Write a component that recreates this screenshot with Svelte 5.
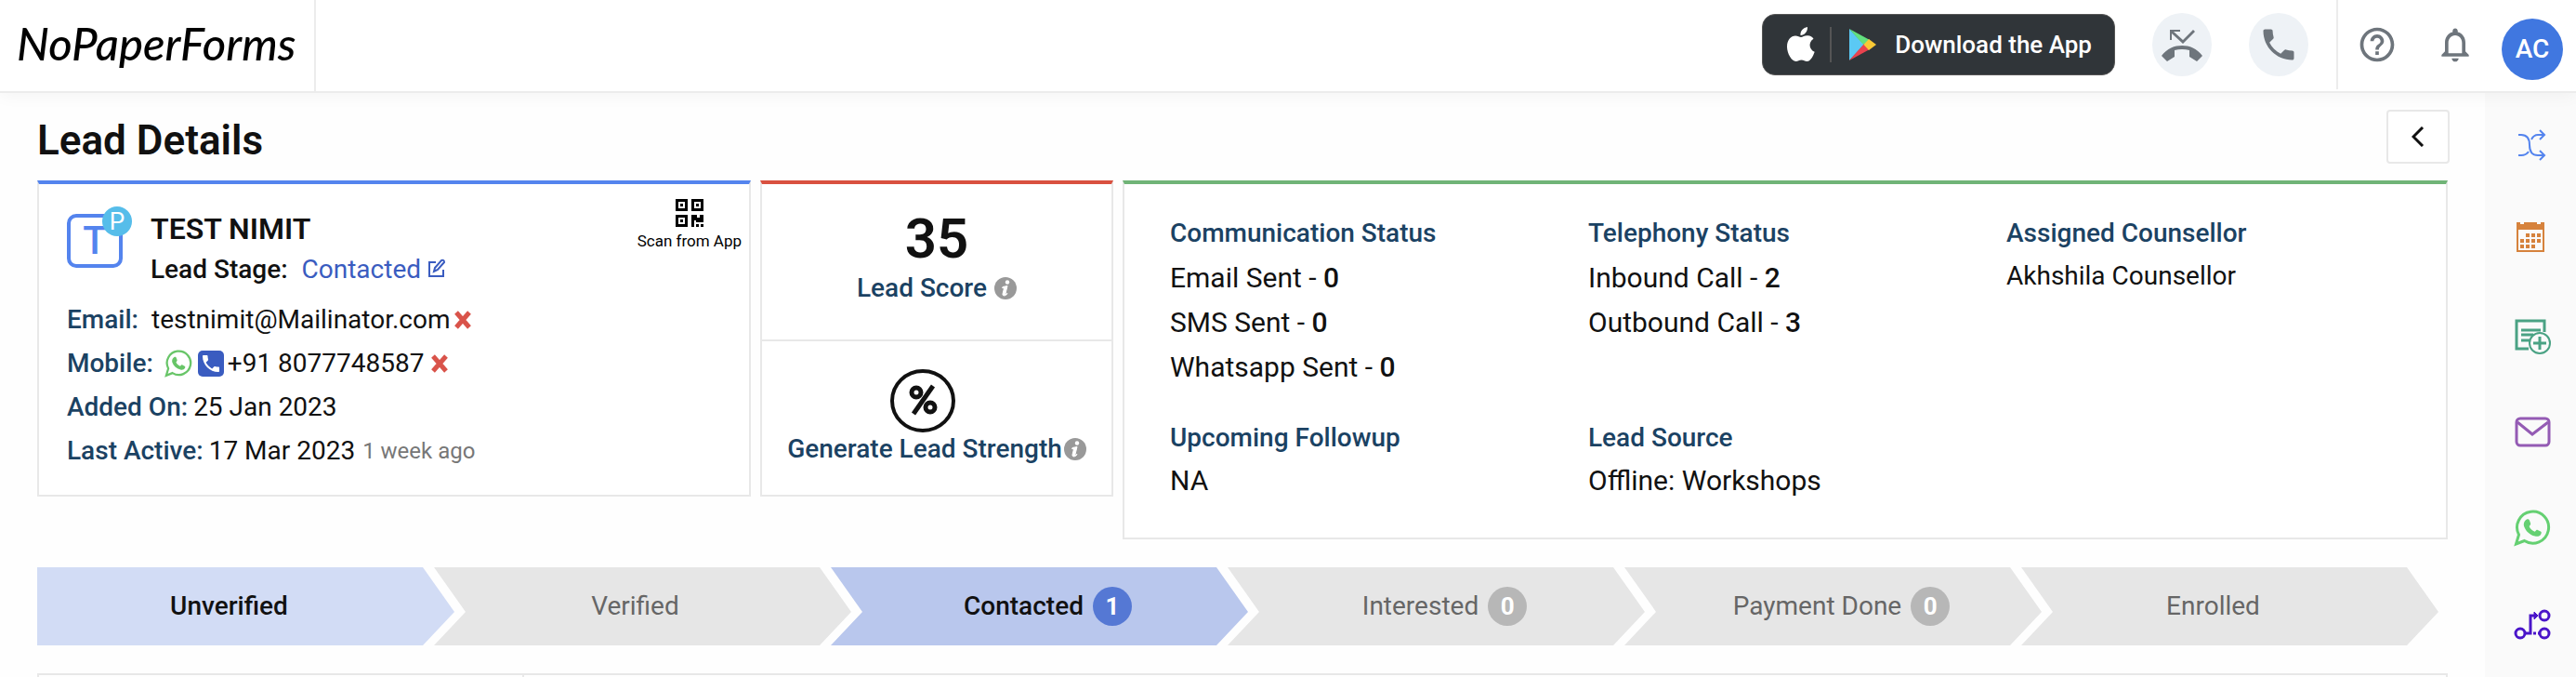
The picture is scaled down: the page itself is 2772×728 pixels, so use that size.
<script>
    let contact = [
        { label: "Added On:", value: "25 Jan 2023", note: "" },
        { label: "Last Active:", value: "17 Mar 2023", note: "1 week ago" },
    ]

    let groups = [
        {
            title: "Communication Status",
            lines: [
                { text: "Email Sent", count: 0 },
                { text: "SMS Sent", count: 0 },
                { text: "Whatsapp Sent", count: 0 },
            ],
        },
        {
            title: "Telephony Status",
            lines: [
                { text: "Inbound Call", count: 2 },
                { text: "Outbound Call", count: 3 },
            ],
        },
        { title: "Assigned Counsellor", value: "Akhshila Counsellor", small: true },
        { title: "Upcoming Followup", value: "NA" },
        { title: "Lead Source", value: "Offline: Workshops" },
    ]

    let stages = [
        { name: "Unverified", state: "done" },
        { name: "Verified", state: "" },
        { name: "Contacted", state: "current", count: 1 },
        { name: "Interested", state: "", count: 0 },
        { name: "Payment Done", state: "", count: 0 },
        { name: "Enrolled", state: "" },
    ]
</script>

{#snippet whatsapp(size)}
    <svg width={size} height={size} viewBox="0 0 40 40" fill="none" aria-hidden="true">
        <path d="M5.500 27 2.500 37l9-3.500a17 17 0 1 0-6-6.500Z" stroke="currentColor" stroke-width="3" />
        <path d="M14 10.500c1.500-.5 2.600 0 3.200 1.700l.9 2.600c.3 1-.2 1.800-1.500 3.200 1.300 2.700 3.300 4.600 6.100 5.800 1.500-1.700 2-2.300 3.100-1.900l3.200 1.600c1 .6.900 1.500.4 2.700-1 2.200-3.700 3.200-6.500 2.400-6.200-1.800-10-5.600-11.800-10.700-.9-2.900.6-6.300 2.900-7.400Z" fill="currentColor" />
    </svg>
{/snippet}

{#snippet info()}
    <svg width="24" height="24" viewBox="0 0 24 24" aria-hidden="true">
        <circle cx="12" cy="12" r="12" fill="#999" />
        <circle cx="14" cy="5.500" r="2.200" fill="#fff" />
        <path d="M9 10.500 14 9.500 12 17.500c-.3 1.200.6 1 2 0-1.500 3-5.500 3.300-5 .5L10.500 12 8.500 11.500Z" fill="#fff" stroke="#fff" />
    </svg>
{/snippet}

{#snippet cross()}
    <svg class="cross" width="18" height="20" viewBox="0 0 18 20" aria-hidden="true">
        <path d="m2 2 14 16M16 2 2 18" stroke="#d9534a" stroke-width="5" />
    </svg>
{/snippet}

<header>
    <a href="/" class="logo">NoPaperForms</a>
    <div class="tools">
        <button class="download">
            <svg width="30" height="38" viewBox="0 0 30 38" fill="#fff" aria-hidden="true">
                <path d="M22 0c.4 4.800-3.200 9-7.500 9C14 4.500 17.500.7 22 0ZM15 11c1.800 0 4-2 7.400-1.700 2.700.2 4.800 1.400 6.100 3.400-6 3.700-4.800 11.700 1.200 14C28 31.600 25 37 21.500 37c-2.500 0-3.300-1.500-6-1.500S12 37 9.500 37C5 37 0 28.500 0 21.300 0 13.500 4.500 9.500 9 9.500c2.500 0 4.600 1.500 6 1.500Z" />
            </svg>
            <span class="bar"></span>
            <svg width="30" height="34" viewBox="0 0 30 34" aria-hidden="true">
                <path d="M1 0v34l16-17Z" fill="#5bc9f4" />
                <path d="M1 0 23 12l-6 6Z" fill="#63e07f" />
                <path d="m1 34 22-12-6-6Z" fill="#e8434f" />
                <path d="m22 11 8 6-8 6-5.500-6Z" fill="#f9c935" />
            </svg>
            Download the App
        </button>
        <button class="round" aria-label="Missed calls">
            <svg width="44" height="44" viewBox="0 0 44 44" fill="currentColor" aria-hidden="true">
                <path d="M9 6h11v2h-7l10 9L34 6l2 2-13 13L11 10v7H9Z" />
                <path d="M0 34C6 26 14 23 22 23s16 3 22 11l-6 6-8-5v-7q-8-2-16 0v7l-8 5Z" />
            </svg>
        </button>
        <button class="round" aria-label="Call">
            <svg width="44" height="44" viewBox="0 0 24 24" fill="currentColor" aria-hidden="true">
                <path d="M6.620 10.790c1.440 2.830 3.760 5.140 6.590 6.590l2.200-2.200c.27-.27.670-.36 1.020-.24 1.120.37 2.330.57 3.570.57.55 0 1 .45 1 1V20c0 .55-.45 1-1 1-9.390 0-17-7.610-17-17 0-.55.450-1 1-1h3.500c.55 0 1 .45 1 1 0 1.250.2 2.450.57 3.570.11.350.03.740-.25 1.020l-2.200 2.200z" />
            </svg>
        </button>
        <div class="account">
            <button aria-label="Help">
                <svg width="44" height="44" viewBox="0 0 24 24" fill="currentColor" aria-hidden="true">
                    <path d="M11 18h2v-2h-2v2zm1-16C6.480 2 2 6.480 2 12s4.480 10 10 10 10-4.480 10-10S17.520 2 12 2zm0 18c-4.410 0-8-3.590-8-8s3.590-8 8-8 8 3.590 8 8-3.590 8-8 8zm0-14c-2.210 0-4 1.790-4 4h2c0-1.100.9-2 2-2s2 .9 2 2c0 2-3 1.750-3 5h2c0-2.250 3-2.500 3-5 0-2.210-1.790-4-4-4z" />
                </svg>
            </button>
            <button aria-label="Notifications">
                <svg width="44" height="44" viewBox="0 0 24 24" fill="currentColor" aria-hidden="true">
                    <path d="M12 22c1.100 0 2-.9 2-2h-4c0 1.100.9 2 2 2zm6-6v-5c0-3.070-1.630-5.640-4.500-6.320V4c0-.83-.67-1.500-1.500-1.500s-1.500.67-1.500 1.500v.68C7.640 5.360 6 7.920 6 11v5l-2 2v1h16v-1l-2-2zm-2 1H8v-6c0-2.480 1.510-4.500 4-4.500s4 2.020 4 4.500v6z" />
                </svg>
            </button>
            <button class="avatar">AC</button>
        </div>
    </div>
</header>

<div class="page">
    <main>
        <div class="title">
            <h1>Lead Details</h1>
            <button class="back" aria-label="Back">
                <svg width="14" height="22" viewBox="0 0 14 22" fill="none" aria-hidden="true">
                    <path d="M12 1 2 11l10 10" stroke="#111" stroke-width="3" />
                </svg>
            </button>
        </div>

        <div class="cards">
            <section class="card lead">
                <div class="person">
                    <div class="initial">T<span class="badge">P</span></div>
                    <div>
                        <h2>TEST NIMIT</h2>
                        <p class="stage-line">
                            <b>Lead Stage:</b>
                            <a href="#stage">Contacted
                                <svg width="20" height="22" viewBox="0 0 20 22" fill="none" stroke="currentColor" stroke-width="2" aria-hidden="true">
                                    <path d="M9 5H2v15h15v-7M8 11l7-8q3-1 3 2l-7 8-4 2Z" />
                                </svg>
                            </a>
                        </p>
                    </div>
                    <button class="scan">
                        <svg width="30" height="30" viewBox="0 0 30 30" fill="#000" aria-hidden="true">
                            <path fill-rule="evenodd" d="M0 0h13v13H0zM3 3v7h7V3zM17 0h13v13H17zM20 3v7h7V3zM0 17h13v13H0zM3 20v7h7v-7z" />
                            <path d="M5 5h3v3H5zM22 5h3v3h-3zM5 22h3v3H5zM17 17h6v3h3v-3h4v8h-8v-2h-2v7h-3zM22 27h3v3h-3zM27 27h3v3h-3z" />
                        </svg>
                        Scan from App
                    </button>
                </div>
                <dl>
                    <div class="email">
                        <dt>Email:</dt>
                        <dd>testnimit@Mailinator.com{@render cross()}</dd>
                    </div>
                    <div>
                        <dt>Mobile:</dt>
                        <dd class="mobile">
                            <span class="wa">{@render whatsapp(30)}</span>
                            <span class="dial">
                                <svg width="24" height="24" viewBox="0 0 24 24" fill="#fff" aria-hidden="true">
                                    <path d="M6.620 10.790c1.440 2.830 3.760 5.140 6.590 6.590l2.200-2.200c.27-.27.670-.36 1.020-.24 1.120.37 2.330.57 3.570.57.55 0 1 .45 1 1V20c0 .55-.45 1-1 1-9.390 0-17-7.610-17-17 0-.55.450-1 1-1h3.500c.55 0 1 .45 1 1 0 1.250.2 2.450.57 3.570.11.350.03.740-.25 1.020l-2.200 2.200z" />
                                </svg>
                            </span>
                            +91 8077748587{@render cross()}
                        </dd>
                    </div>
                    {#each contact as item}
                        <div>
                            <dt>{item.label}</dt>
                            <dd>{item.value} {#if item.note}<small>{item.note}</small>{/if}</dd>
                        </div>
                    {/each}
                </dl>
            </section>

            <section class="card score">
                <div class="cell">
                    <strong>35</strong>
                    <p>Lead Score {@render info()}</p>
                </div>
                <div class="cell strength">
                    <svg class="percent" width="70" height="68" viewBox="0 0 70 68" fill="none" stroke="#111" aria-hidden="true">
                        <ellipse cx="35" cy="34" rx="33" ry="32" stroke-width="4" />
                        <circle cx="28" cy="25" r="5" stroke-width="5" />
                        <circle cx="43" cy="41" r="5" stroke-width="5" />
                        <path d="m25 48 21-30" stroke-width="5" />
                    </svg>
                    <p>Generate Lead Strength{@render info()}</p>
                </div>
            </section>

            <section class="card status">
                {#each groups as group}
                    <div>
                        <h3>{group.title}</h3>
                        {#if group.lines}
                            {#each group.lines as line}
                                <p>{line.text} - <b>{line.count}</b></p>
                            {/each}
                        {:else}
                            <p class="value" class:small={group.small}>{group.value}</p>
                        {/if}
                    </div>
                {/each}
            </section>
        </div>

        <ol class="stages">
            {#each stages as stage}
                <li class={stage.state} class:counted={stage.count !== undefined}>
                    {stage.name}
                    {#if stage.count !== undefined}<span>{stage.count}</span>{/if}
                </li>
            {/each}
        </ol>

        <div class="panels"><div></div><div></div></div>
    </main>

    <nav>
        <a href="#reassign" class="shuffle" aria-label="Reassign">
            <svg width="40" height="40" viewBox="0 0 40 40" fill="none" stroke="currentColor" stroke-width="2" aria-hidden="true">
                <path d="M5 9h3c6 0 9 4 9 11s3 11 9 11h7M5 31h3c4 0 6-1 8-4M19 14c2-4 4-5 7-5h7M28 4l5 5-5 5M28 26l5 5-5 5" />
            </svg>
        </a>
        <a href="#calendar" class="calendar" aria-label="Calendar">
            <svg width="40" height="40" viewBox="0 4 40 40" fill="currentColor" aria-hidden="true">
                <path fill-rule="evenodd" d="M3 4h4v2h4V4h14v2h4V4h4v32H3zM5 12v22h26V12z" />
                <path d="M13 16h4v4h-4zM19 16h4v4h-4zM25 16h4v4h-4zM7 22h4v4H7zM13 22h4v4h-4zM19 22h4v4h-4zM25 22h4v4h-4zM7 28h4v4H7zM13 28h4v4h-4zM19 28h4v4h-4z" />
            </svg>
        </a>
        <a href="#note" class="note" aria-label="Add note">
            <svg width="40" height="40" viewBox="0 0 40 40" fill="none" stroke="currentColor" aria-hidden="true">
                <path d="M16 33H3V3h30v12M8 13h21M8 18h13M8 24h9" stroke-width="3" />
                <circle cx="28" cy="27" r="11" stroke-width="2" />
                <path d="M28 20v14M21 27h14" stroke-width="3" />
            </svg>
        </a>
        <a href="#mail" class="mail" aria-label="Email">
            <svg width="40" height="40" viewBox="0 0 40 40" fill="none" stroke="currentColor" stroke-width="3" aria-hidden="true">
                <rect x="3" y="5" width="35" height="29" rx="4" />
                <path d="m4 9 16 13L37 9" />
            </svg>
        </a>
        <a href="#whatsapp" class="chat" aria-label="WhatsApp">{@render whatsapp(40)}</a>
        <a href="#journey" class="journey" aria-label="Journey">
            <svg width="40" height="40" viewBox="0 0 40 40" fill="none" stroke="currentColor" stroke-width="3" aria-hidden="true">
                <circle cx="7" cy="30" r="5" />
                <circle cx="33" cy="30" r="5" />
                <circle cx="33" cy="11" r="5" />
                <path d="M12 30h6V11h5M21 30h3M26 30h2" />
                <path d="m22 7 4 4-4 4Z" fill="currentColor" stroke-width="1" />
            </svg>
        </a>
    </nav>
</div>

<style>
    :global(body) {
        background: #fefefe;
        color: #111;
        font-family: Roboto, "Liberation Sans", sans-serif;
        font-size: 28px;
        line-height: 48px;
    }

    h1,
    h2,
    h3,
    p,
    dl,
    dd,
    ol {
        margin: 0;
        padding: 0;
    }

    button {
        display: flex;
        align-items: center;
        justify-content: center;
        padding: 0;
        border: none;
        background: none;
        color: inherit;
        font: inherit;
        cursor: pointer;
    }

    a {
        text-decoration: none;
    }

    b {
        font-weight: 500;
    }

    svg {
        flex: none;
    }

    header {
        position: relative;
        display: flex;
        justify-content: space-between;
        height: 98px;
        border-bottom: 2px solid #ececec;
        background: #fff;
        box-shadow: 0 4px 16px rgba(0, 0, 0, 0.04);
    }

    .logo {
        box-sizing: border-box;
        width: 340px;
        padding-left: 18px;
        border-right: 2px solid #ececec;
        color: #000;
        font-family: Lato, sans-serif;
        font-size: 49px;
        font-style: italic;
        font-weight: 500;
        line-height: 92px;
    }

    .tools {
        display: flex;
        align-items: center;
        height: 96px;
    }

    .download {
        box-sizing: border-box;
        height: 66px;
        padding: 0 24px 0 26px;
        margin-right: 40px;
        border: 1px solid #555;
        border-radius: 14px;
        background: #303539;
        color: #fff;
        font-size: 26px;
        font-weight: 500;
    }

    .bar {
        width: 2px;
        height: 38px;
        margin: 0 18px 0 16px;
        background: #555;
    }

    .download svg:last-of-type {
        margin-right: 20px;
    }

    .round {
        width: 64px;
        height: 68px;
        margin-right: 40px;
        border-radius: 50%;
        background: #eef2f6;
        color: #6e757c;
    }

    .round:nth-child(3) {
        margin-right: 30px;
    }

    .account {
        display: flex;
        align-items: center;
        gap: 40px;
        height: 96px;
        padding: 0 14px 0 20px;
        border-left: 2px solid #ececec;
        color: #6e757c;
    }

    .avatar {
        width: 66px;
        height: 66px;
        margin: 10px 0 0 -12px;
        border-radius: 50%;
        background: #4077e0;
        color: #fff;
        font-weight: 500;
    }

    .page {
        display: flex;
    }

    main {
        flex: 1;
        padding: 18px 40px 0;
    }

    .title {
        display: flex;
        align-items: center;
        justify-content: space-between;
        margin: 0 -2px 18px 0;
    }

    h1 {
        padding-top: 8px;
        font-size: 44px;
        font-weight: 600;
    }

    .back {
        box-sizing: border-box;
        width: 68px;
        height: 58px;
        border: 2px solid #e8e8e8;
        border-radius: 4px;
        background: #fff;
    }

    .cards {
        display: grid;
        grid-template-columns: 768fr 380fr 1426fr;
        gap: 10px;
        align-items: start;
    }

    .card {
        box-sizing: border-box;
        border: 2px solid #e8e8e8;
        border-top: 4px solid #5484ee;
        background: #fff;
    }

    .lead {
        height: 340px;
        padding: 16px 8px 0 30px;
    }

    .person {
        display: flex;
        align-items: flex-start;
        height: 106px;
    }

    .initial {
        position: relative;
        box-sizing: border-box;
        width: 60px;
        height: 58px;
        margin: 16px 30px 0 0;
        border: 4px solid #5484ee;
        border-radius: 10px;
        color: #5484ee;
        font-size: 42px;
        font-weight: 500;
        line-height: 50px;
        text-align: center;
    }

    .badge {
        position: absolute;
        top: -12px;
        right: -14px;
        width: 32px;
        height: 32px;
        border-radius: 50%;
        background: #56bdea;
        color: #fff;
        font-size: 26px;
        font-weight: 400;
        line-height: 32px;
    }

    h2 {
        padding-top: 10px;
        font-size: 32px;
        font-weight: 600;
        line-height: 44px;
    }

    .stage-line {
        line-height: 44px;
    }

    .stage-line a {
        margin-left: 8px;
        color: #3a5cc0;
    }

    .scan {
        flex-direction: column;
        margin-left: auto;
        color: #000;
        font-size: 17px;
        line-height: 30px;
    }

    dl > div {
        display: flex;
        gap: 6px;
        height: 47px;
    }

    dd {
        display: flex;
        align-items: center;
    }

    .email dt {
        margin-right: 8px;
    }

    dt,
    h3,
    .cell p {
        color: #1b4263;
        font-size: 28px;
        font-weight: 500;
    }

    .cross {
        margin-left: 4px;
    }

    .mobile {
        margin-left: 6px;
    }

    .mobile .cross {
        margin-left: 8px;
    }

    .wa {
        display: flex;
        color: #68c568;
    }

    .dial {
        display: flex;
        align-items: center;
        justify-content: center;
        width: 28px;
        height: 28px;
        margin: 0 4px 0 6px;
        border-radius: 5px;
        background: #3a5cc0;
    }

    small {
        margin-left: 8px;
        color: #777;
        font-size: 24px;
    }

    .score {
        height: 340px;
        border-top-color: #d95140;
        text-align: center;
    }

    .cell {
        box-sizing: border-box;
        height: 167px;
        padding-top: 26px;
    }

    .cell strong {
        display: block;
        font-size: 60px;
        font-weight: 600;
        line-height: 66px;
    }

    .cell p {
        display: flex;
        align-items: center;
        justify-content: center;
        gap: 8px;
        line-height: 40px;
    }

    .strength {
        border-top: 2px solid #e8e8e8;
    }

    .strength p {
        gap: 2px;
    }

    .percent {
        display: block;
        margin: 4px auto -2px 138px;
    }

    .status {
        display: grid;
        grid-template-columns: repeat(3, 450px);
        grid-template-rows: 220px auto;
        height: 386px;
        padding: 29px 0 0 49px;
        border-top-color: #70b477;
        font-size: 30px;
    }

    .status .value {
        line-height: 44px;
    }

    .status .small {
        font-size: 28px;
    }

    .stages {
        display: flex;
        margin: 30px 10px 30px 0;
        list-style: none;
    }

    /* side paddings always add up to 36px so every step stays the same width */
    li {
        display: flex;
        flex: 1;
        align-items: center;
        justify-content: center;
        height: 84px;
        margin-right: -22px;
        padding: 0 26px 0 10px;
        background: #e6e6e6;
        clip-path: polygon(0 0, calc(100% - 34px) 0, 100% 57%, calc(100% - 34px) 100%, 0 100%, 34px 57%);
        color: #666;
    }

    li.counted {
        padding: 0 9px 0 27px;
    }

    li:first-child {
        padding: 0 36px 0 0;
        clip-path: polygon(0 0, calc(100% - 34px) 0, 100% 57%, calc(100% - 34px) 100%, 0 100%);
    }

    li:last-child {
        margin-right: 0;
        padding: 0 36px 0 0;
    }

    li.done {
        background: #d2dcf5;
        color: #111;
        font-weight: 500;
    }

    li.current {
        background: #b9c7ed;
        color: #111;
        font-weight: 500;
    }

    li span {
        width: 42px;
        margin-left: 10px;
        border-radius: 50%;
        background: #b7b7b7;
        color: #fff;
        font-size: 26px;
        font-weight: 700;
        line-height: 42px;
        text-align: center;
    }

    li.current span {
        background: #5578d4;
    }

    .panels {
        display: grid;
        grid-template-columns: 522px 1fr;
        border-top: 2px solid #e8e8e8;
        border-right: 2px solid #e8e8e8;
    }

    .panels div {
        height: 2px;
        border-left: 2px solid #e8e8e8;
    }

    nav {
        display: flex;
        flex-direction: column;
        gap: 63px;
        box-sizing: border-box;
        width: 98px;
        padding: 36px 0 0 31px;
        background: #fafafa;
    }

    nav a {
        display: flex;
    }

    .shuffle {
        color: #5484ee;
    }

    .calendar {
        color: #d6823c;
    }

    .note {
        color: #4aa284;
    }

    .mail {
        color: #945bb4;
    }

    .chat {
        color: #65d072;
    }

    .journey {
        color: #4a15c9;
    }
</style>
